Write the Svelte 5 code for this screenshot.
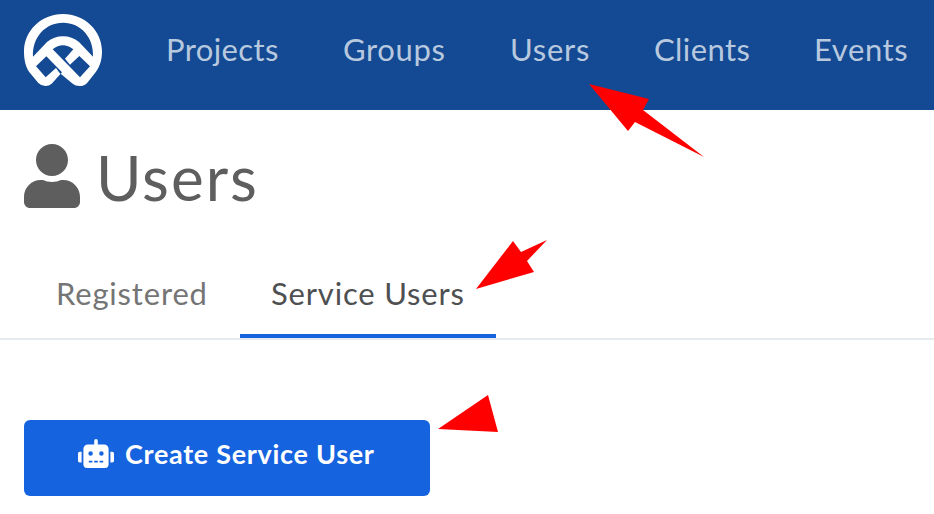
<script>
  const links = [
    { label: 'Projects', width: 113, spacing: 0.4 },
    { label: 'Groups', width: 103, spacing: 0.65 },
    { label: 'Users', width: 80, spacing: 0.75 },
    { label: 'Clients', width: 96, spacing: 0.4 },
    { label: 'Events', width: 94, spacing: 0.6 }
  ];
</script>

<div class="page">
  <header>
    <svg class="logo" viewBox="0 0 300 300" width="100" height="100" aria-label="Home">
      <path fill="#fff" d="M147 30C212 30 264 80 264 142C264 167 258 186 246 203L220 236Q211 246 197 246Q184 246 177 240L140 209L113 239Q105 246 94 246Q82 246 73 237L45 203C34 186 30 167 30 142C30 80 82 30 147 30Z"/>
      <g fill="#134a93">
        <path d="M57 158C54 100 94 56 147 56C200 56 240 100 237 158L195 114Q174 97 147 97Q120 97 99 114Z"/>
        <path d="M116 136Q146 112 178 136L153 164L168 182L196 156L228 187L198 220Z"/>
        <path d="M97 157L66 187L95 220L126 192L139 210L144 205Z"/>
      </g>
    </svg>
    <nav>
      {#each links as link}
        <a href="#top" style:width="{link.width}px" style:letter-spacing="{link.spacing}px">{link.label}</a>
      {/each}
    </nav>
  </header>

  <div class="title">
    <svg viewBox="0 0 448 512" width="56" height="64" aria-hidden="true">
      <path fill="#5e5e5e" d="M224 256c70.700 0 128-57.300 128-128S294.700 0 224 0 96 57.300 96 128s57.300 128 128 128zm89.600 32h-16.700c-22.200 10.200-46.900 16-72.900 16s-50.600-5.800-72.900-16h-16.700C60.200 288 0 348.200 0 422.400V464c0 26.500 21.500 48 48 48h352c26.500 0 48-21.500 48-48v-41.600c0-74.200-60.200-134.400-134.400-134.400z"/>
    </svg>
    <h1>Users</h1>
  </div>

  <div class="tabs">
    <a class="tab first" href="#registered">Registered</a>
    <a class="tab active" href="#service">Service Users</a>
  </div>

  <button>
    <svg viewBox="0 0 640 512" width="36" height="29" aria-hidden="true">
      <path fill="#fff" d="M32 224h32v192H32a32 32 0 0 1-32-32V256a32 32 0 0 1 32-32zm512-48v272a64 64 0 0 1-64 64H160a64 64 0 0 1-64-64V176a80 80 0 0 1 80-80h112V32a32 32 0 0 1 64 0v64h112a80 80 0 0 1 80 80zM264 256a40 40 0 1 0-40 40 40 40 0 0 0 40-40zm-8 128h-64v32h64zm96 0h-64v32h64zm104-128a40 40 0 1 0-40 40 40 40 0 0 0 40-40zm-8 128h-64v32h64zm192-128v128a32 32 0 0 1-32 32h-32V224h32a32 32 0 0 1 32 32z"/>
    </svg>
    <span>Create Service User</span>
  </button>

  <svg class="arrows" viewBox="0 0 934 514" width="934" height="514" aria-hidden="true">
    <g fill="#f00">
      <path d="M589 84L649 99L643 110L704 157L635 122L628 131Z"/>
      <path d="M476 289L513 241L521 252L547 240L527 261L534 272Z"/>
      <path d="M438 429L488 395L498 432Z"/>
    </g>
  </svg>
</div>

<style>
  .page {
    position: relative;
    width: 934px;
    height: 514px;
    overflow: hidden;
    background: #fff;
    font-family: Lato, "Liberation Sans", sans-serif;
  }
  header {
    display: flex;
    align-items: flex-start;
    height: 110px;
    box-sizing: border-box;
    padding: 4px 0 0 14px;
    background: #134a93;
  }
  .logo { flex: none; }
  nav {
    display: flex;
    gap: 64px;
    margin: 25px 0 0 52px;
  }
  a { text-decoration: none; white-space: nowrap; }
  nav a {
    flex: none;
    font-size: 31px;
    line-height: 40px;
    color: #b8c9df;
  }
  .title {
    display: flex;
    height: 98px;
    padding: 34px 0 0 24px;
    gap: 16px;
  }
  h1 {
    margin: -7px 0 0;
    font-size: 62px;
    line-height: 80px;
    font-weight: 400;
    letter-spacing: 2px;
    color: #5e5e5e;
  }
  .tabs {
    display: flex;
    height: 96px;
    border-bottom: 2px solid #e6ebf0;
  }
  .tab {
    box-sizing: border-box;
    height: 96px;
    padding: 31px 0 0 31px;
    font-size: 31px;
    line-height: 40px;
    letter-spacing: 0.82px;
    color: #757575;
  }
  .first { width: 216px; margin-left: 24px; padding-left: 32px; }
  .active {
    width: 256px;
    border-bottom: 4px solid #1563df;
    color: #4f5052;
  }
  button {
    display: flex;
    box-sizing: border-box;
    width: 406px;
    height: 76px;
    margin: 80px 0 0 24px;
    padding: 19px 0 0 54px;
    gap: 11px;
    border: 0;
    border-radius: 6px;
    background: #1563df;
    color: #fff;
    font: 700 27px/32px Lato, "Liberation Sans", sans-serif;
    letter-spacing: 0.7px;
    white-space: nowrap;
  }
  button span { margin-top: -1px; }
  .arrows {
    position: absolute;
    inset: 0;
    pointer-events: none;
  }
</style>
